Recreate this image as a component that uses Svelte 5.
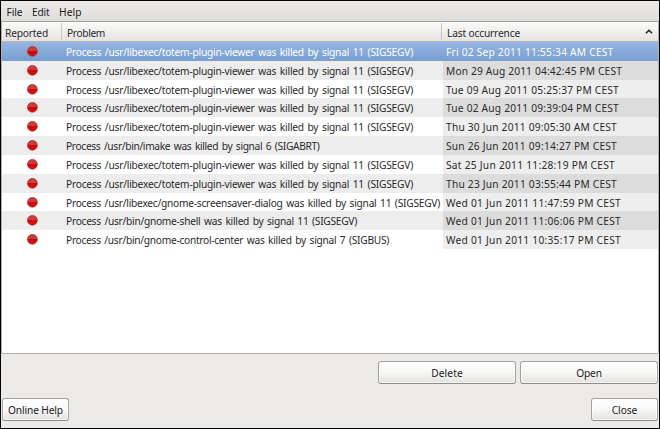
<script>
  const totem = 'Process /usr/libexec/totem-plugin-viewer was killed by signal 11 (SIGSEGV)';
  // w / dw: drawn widths of the problem and date labels, in pixels
  const rows = [
    { problem: totem, w: 347, date: 'Fri 02 Sep 2011 11:55:34 AM CEST', dw: 167.5 },
    { problem: totem, w: 347, date: 'Mon 29 Aug 2011 04:42:45 PM CEST', dw: 176 },
    { problem: totem, w: 347, date: 'Tue 09 Aug 2011 05:25:37 PM CEST', dw: 173 },
    { problem: totem, w: 347, date: 'Tue 02 Aug 2011 09:39:04 PM CEST', dw: 173 },
    { problem: totem, w: 347, date: 'Thu 30 Jun 2011 09:05:30 AM CEST', dw: 171 },
    { problem: 'Process /usr/bin/imake was killed by signal 6 (SIGABRT)', w: 253.5, date: 'Sun 26 Jun 2011 09:14:27 PM CEST', dw: 171 },
    { problem: totem, w: 347, date: 'Sat 25 Jun 2011 11:28:19 PM CEST', dw: 169 },
    { problem: totem, w: 347, date: 'Thu 23 Jun 2011 03:55:44 PM CEST', dw: 171 },
    { problem: 'Process /usr/libexec/gnome-screensaver-dialog was killed by signal 11 (SIGSEGV)', w: 374, date: 'Wed 01 Jun 2011 11:47:59 PM CEST', dw: 175 },
    { problem: 'Process /usr/bin/gnome-shell was killed by signal 11 (SIGSEGV)', w: 291, date: 'Wed 01 Jun 2011 11:06:06 PM CEST', dw: 175 },
    { problem: 'Process /usr/bin/gnome-control-center was killed by signal 7 (SIGBUS)', w: 323, date: 'Wed 01 Jun 2011 10:35:17 PM CEST', dw: 175 }
  ];

  // Tracks a label out or in until it spans the given width.
  function fit(node, width) {
    const natural = node.getBoundingClientRect().width;
    node.style.letterSpacing = `${(width - natural) / node.textContent.length}px`;
  }
</script>

<div class="window">
  <nav class="menu">
    <span use:fit={15.8}>File</span>
    <span use:fit={17.3}>Edit</span>
    <span use:fit={22.5}>Help</span>
  </nav>

  <section class="list">
    <header class="row head">
      <div class="c1"><span use:fit={43}>Reported</span></div>
      <div class="c2"><span use:fit={38}>Problem</span></div>
      <div class="c3">
        <span use:fit={73}>Last occurrence</span>
        <svg width="8" height="5" viewBox="0 0 8 5"><path d="M1 4.2 4 1.2 7 4.2" fill="none" stroke="#222" stroke-width="1.5" /></svg>
      </div>
    </header>
    <div class="body">
      {#each rows as r, i}
        <div class="row item" class:selected={i === 0}>
          <div class="c1">
            <svg width="12" height="12" viewBox="0 0 12 12">
              <defs>
                <linearGradient id="ball{i}" x1="0" y1="0" x2="0" y2="1">
                  <stop offset="0" stop-color="#b84444" />
                  <stop offset=".42" stop-color="#cf3a3a" />
                  <stop offset=".54" stop-color="#cc0000" />
                  <stop offset=".8" stop-color="#ee0808" />
                  <stop offset="1" stop-color="#c40000" />
                </linearGradient>
              </defs>
              <circle cx="6.4" cy="6.3" r="4.9" fill="url(#ball{i})" stroke="#a82a2a" stroke-width=".7" />
            </svg>
          </div>
          <div class="c2"><span use:fit={r.w}>{r.problem}</span></div>
          <div class="c3"><span use:fit={r.dw}>{r.date}</span></div>
        </div>
      {/each}
    </div>
  </section>

  <div class="actions">
    <button class="wide"><span use:fit={31.5}>Delete</span></button>
    <button class="wide"><span use:fit={25.5}>Open</span></button>
  </div>
  <footer>
    <button><span use:fit={55}>Online Help</span></button>
    <button><span use:fit={25.5}>Close</span></button>
  </footer>
</div>

<style>
  :global(body) { margin: 0; }
  .window {
    box-sizing: border-box;
    width: 660px;
    height: 429px;
    border: 1px solid #000;
    background: #ebeae9;
    color: #2a2a2a;
    font: 10.2px/14px "Noto Sans", "Open Sans", sans-serif;
    display: flex;
    flex-direction: column;
    overflow: hidden;
  }
  span { white-space: pre; }
  .menu {
    box-sizing: border-box;
    height: 21px;
    flex: none;
    display: flex;
    gap: 9.7px;
    padding: 4px 0 0 5.6px;
    background: linear-gradient(#ebeae9, #dfdedd);
    border-bottom: 1px solid #a3a29f;
    color: #1c1c1c;
  }
  .list {
    box-sizing: border-box;
    height: 332px;
    flex: none;
    background: #fff;
    border: solid #b2b1af;
    border-width: 0 1px 1px;
  }
  .row { display: flex; }
  .c1, .c2, .c3 { box-sizing: border-box; display: flex; align-items: center; }
  .c1 { width: 60px; }
  .c2 { width: 381px; }
  .c3 { flex: 1; }
  .head {
    box-sizing: border-box;
    height: 20px;
    background: linear-gradient(#fbfbfa, #e6e4e2);
    border-bottom: 1px solid #b6b5b3;
  }
  .head .c1 { width: 59px; padding: 2px 0 0 3px; }
  .head .c2 { width: 380px; padding: 2px 0 0 5px; }
  .head .c3 { padding: 2px 5px 0 5px; justify-content: space-between; }
  .head .c2, .head .c3 {
    border-left: 1px solid;
    border-image: linear-gradient(transparent 12%, #c8c6c4 12% 88%, transparent 88%) 1;
  }
  .head svg { margin-bottom: 2px; }
  .item { height: 18.83px; }
  .item .c1 { justify-content: center; padding-bottom: 1px; }
  .item .c2 { padding: 1px 0 0 4px; word-spacing: 1.2px; }
  .item .c3 { padding: 1px 0 0 3px; background: #eee; }
  .item:nth-child(even) { background: #ededed; }
  .item:nth-child(even) .c3 { background: #dcdcdc; }
  .item.selected { background: linear-gradient(#95b5e1, #779fd3); color: #fff; }
  .item.selected .c3 { background: none; }
  .actions { display: flex; justify-content: flex-end; gap: 4px; padding: 7px 1px 0 0; }
  footer { display: flex; justify-content: space-between; padding: 14px 1px 0 1px; }
  button {
    box-sizing: border-box;
    width: 67px;
    height: 23px;
    padding: 1px 0 0;
    border: 1px solid #a5a3a1;
    border-bottom-color: #8f8d8b;
    border-radius: 3px;
    background: linear-gradient(#fff, #f7f7f6 50%, #e4e2e0);
    box-shadow: inset 0 0 0 1px #fffa;
    color: #222;
    font: inherit;
  }
  .wide { width: 138px; }
</style>
